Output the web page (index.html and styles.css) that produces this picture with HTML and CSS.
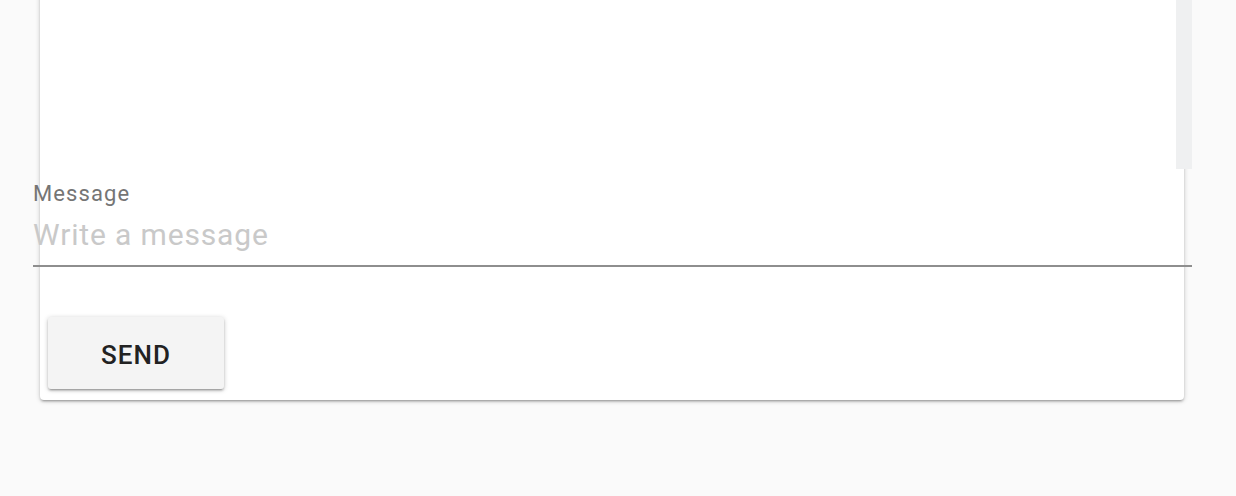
FILE: index.html
```html
<!DOCTYPE html>
<html lang="en">
<head>
<meta charset="utf-8">
<title>Message</title>
<link rel="stylesheet" href="styles.css">
</head>
<body>
<main class="page">
  <section class="card">
    <div class="messages">
      <div class="messages-list"></div>
      <div class="scrollbar"></div>
    </div>
    <form class="composer">
      <label class="field">
        <span class="field-label">Message</span>
        <input class="field-input" type="text" placeholder="Write a message">
      </label>
      <div class="actions">
        <button class="send-btn" type="button">SEND</button>
      </div>
    </form>
  </section>
</main>
</body>
</html>
```
FILE: styles.css
```css
* { box-sizing: border-box; }
html, body { margin: 0; padding: 0; }
body {
  background: #fafafa;
  font-family: Roboto, "Liberation Sans", Arial, sans-serif;
  width: 1236px;
  height: 496px;
  overflow: hidden;
}
.page {
  padding-left: 40px;
}
.card {
  width: 1144px;
  margin-top: -20px;
  background: #fff;
  border-radius: 0 0 4px 4px;
  box-shadow: 0 1px 5px rgba(0,0,0,0.2), 0 2px 2px rgba(0,0,0,0.14), 0 3px 1px -2px rgba(0,0,0,0.12);
}
.messages {
  display: flex;
  width: 1152px;
  height: 189px;
}
.messages-list {
  flex: 1;
  background: #fff;
}
.scrollbar {
  width: 16px;
  background: #eff0f1;
}
.composer {
  display: flex;
  flex-direction: column;
}
.field {
  display: flex;
  flex-direction: column;
  margin-left: -7px;
  width: 1159px;
  padding-top: 12px;
  padding-bottom: 13px;
  border-bottom: 2px solid #8e8e8e;
}
.field-label {
  font-size: 22px;
  line-height: 26px;
  letter-spacing: 1.1px;
  color: #757575;
}
.field-input {
  margin-top: 11px;
  border: 0;
  padding: 0;
  outline: none;
  background: transparent;
  font-family: inherit;
  font-size: 30px;
  line-height: 34px;
  height: 34px;
  letter-spacing: 0.85px;
  color: #222;
}
.field-input::placeholder {
  color: #c9c9c9;
  opacity: 1;
}
.actions {
  padding: 50px 8px 11px;
}
.send-btn {
  width: 176px;
  height: 72px;
  padding: 3px 0 0;
  border: 0;
  border-radius: 3px;
  background: #f4f4f4;
  font-family: inherit;
  font-size: 26px;
  font-weight: 500;
  letter-spacing: 1px;
  color: #222;
  box-shadow: 0 1px 5px rgba(0,0,0,0.22), 0 2px 2px rgba(0,0,0,0.16), 0 3px 1px -2px rgba(0,0,0,0.14);
  cursor: pointer;
}
```
